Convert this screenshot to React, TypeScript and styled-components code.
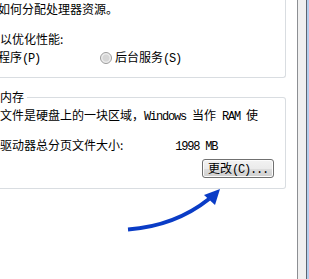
import React from "react";
import styled, { createGlobalStyle } from "styled-components";

const Global = createGlobalStyle`
  html, body { margin: 0; padding: 0; background: #fff; }
  body {
    font-family: "Noto Sans CJK SC", "Noto Sans", sans-serif;
    font-size: 12px;
    color: #000;
  }
`;

const Screen = styled.div`
  position: relative;
  width: 309px;
  height: 279px;
  display: flex;
  overflow: hidden;
  background: #fff;
`;

const Page = styled.div`
  box-sizing: border-box;
  flex: 0 0 298px;
  height: 100%;
  padding-right: 11px;
  border-right: 1px solid #8d8f93;
  background: #fff;
  display: flex;
  flex-direction: column;
`;

const DialogBody = styled.div`
  flex: 0 0 8px;
  background: #f0f0f0;
`;

const Frame = styled.div`
  flex: 0 0 1px;
  background: #5c6470;
`;

const Outer = styled.div`
  flex: 1;
  background: #b4cdec;
`;

const UpperGroup = styled.div`
  box-sizing: border-box;
  height: 78px;
  padding-top: 1px;
  border-right: 1px solid #d9dde1;
  border-bottom: 1px solid #d9dde1;
  border-bottom-right-radius: 3px;
  display: flex;
  flex-direction: column;
`;

const Line = styled.div<{ $top?: number; $indent?: number }>`
  height: 16px;
  line-height: 16px;
  white-space: pre;
  margin-top: ${(p) => p.$top ?? 0}px;
  margin-left: ${(p) => p.$indent ?? 0}px;
`;

const RadioRow = styled.div`
  height: 16px;
  line-height: 16px;
  margin-top: 3px;
  margin-left: -2px;
  display: flex;
  align-items: center;
  white-space: nowrap;
`;

const RadioOption = styled.label<{ $width?: number }>`
  display: flex;
  align-items: center;
  gap: 3px;
  ${(p) => (p.$width ? `flex: 0 0 ${p.$width}px;` : "")}
`;

const RadioDot = styled.span`
  box-sizing: border-box;
  width: 12px;
  height: 12px;
  border-radius: 50%;
  border: 1px solid #9a9a9a;
  background: radial-gradient(circle at 50% 50%, #d6d6d6 0 3px, #ececec 4px, #f7f7f7 100%);
`;

const Mono = styled.span<{ $gap?: number }>`
  font-family: "Liberation Mono", "DejaVu Sans Mono", monospace;
  font-size: 12px;
  letter-spacing: -1.2px;
  white-space: pre;
  margin-left: ${(p) => p.$gap ?? 0}px;
`;

const MemoryGroup = styled.fieldset`
  box-sizing: border-box;
  margin: 11px 0 0 0;
  padding: 0 0 10px 0;
  min-width: 0;
  border: 1px solid #d9dde1;
  border-left: none;
  border-radius: 0 3px 3px 0;
  display: flex;
  flex-direction: column;
`;

const Legend = styled.legend`
  padding: 0 3px 0 0;
  margin: 0;
  height: 16px;
  line-height: 16px;
`;

const ButtonRow = styled.div`
  display: flex;
  justify-content: flex-end;
  margin-top: 6px;
  padding-right: 11px;
`;

const Button = styled.button`
  box-sizing: border-box;
  width: 72px;
  height: 19px;
  border: 1px solid #707070;
  border-radius: 3px;
  background: linear-gradient(#f2f2f2 0%, #ebebeb 50%, #dddddd 51%, #cfcfcf 100%);
  box-shadow: inset 0 0 0 1px #fcfcfc;
  font-family: "Noto Sans CJK SC", sans-serif;
  font-size: 12px;
  line-height: 15px;
  color: #000;
  text-align: left;
  padding: 0 0 0 5px;
  white-space: nowrap;
`;

const ArrowLayer = styled.svg`
  position: absolute;
  left: 0;
  top: 0;
  pointer-events: none;
`;

export default function App() {
  return (
    <>
      <Global />
      <Screen>
        <Page>
          <UpperGroup>
            <Line $indent={-2}>如何分配处理器资源。</Line>
            <Line $top={14}>以优化性能:</Line>
            <RadioRow>
              <RadioOption $width={102}>
                <span>
                  程序<Mono>(P)</Mono>
                </span>
              </RadioOption>
              <RadioOption>
                <RadioDot />
                <span>
                  后台服务<Mono>(S)</Mono>
                </span>
              </RadioOption>
            </RadioRow>
          </UpperGroup>
          <MemoryGroup>
            <Legend>内存</Legend>
            <Line $top={2}>
              文件是硬盘上的一块区域，<Mono>{"Windows "}</Mono>当作<Mono>{" RAM "}</Mono>使
            </Line>
            <Line $top={14}>
              驱动器总分页文件大小:
              <Mono $gap={52}>1998 MB</Mono>
            </Line>
            <ButtonRow>
              <Button type="button">
                更改<Mono>(C)...</Mono>
              </Button>
            </ButtonRow>
          </MemoryGroup>
        </Page>
        <DialogBody />
        <Frame />
        <Outer />
        <ArrowLayer width="309" height="279" viewBox="0 0 309 279">
          <path
            d="M128 229.5 Q 175 226 209 199"
            fill="none"
            stroke="#0a3cc6"
            strokeWidth="4"
          />
          <polygon points="220,189 204,195 215,205" fill="#0a3cc6" />
        </ArrowLayer>
      </Screen>
    </>
  );
}
